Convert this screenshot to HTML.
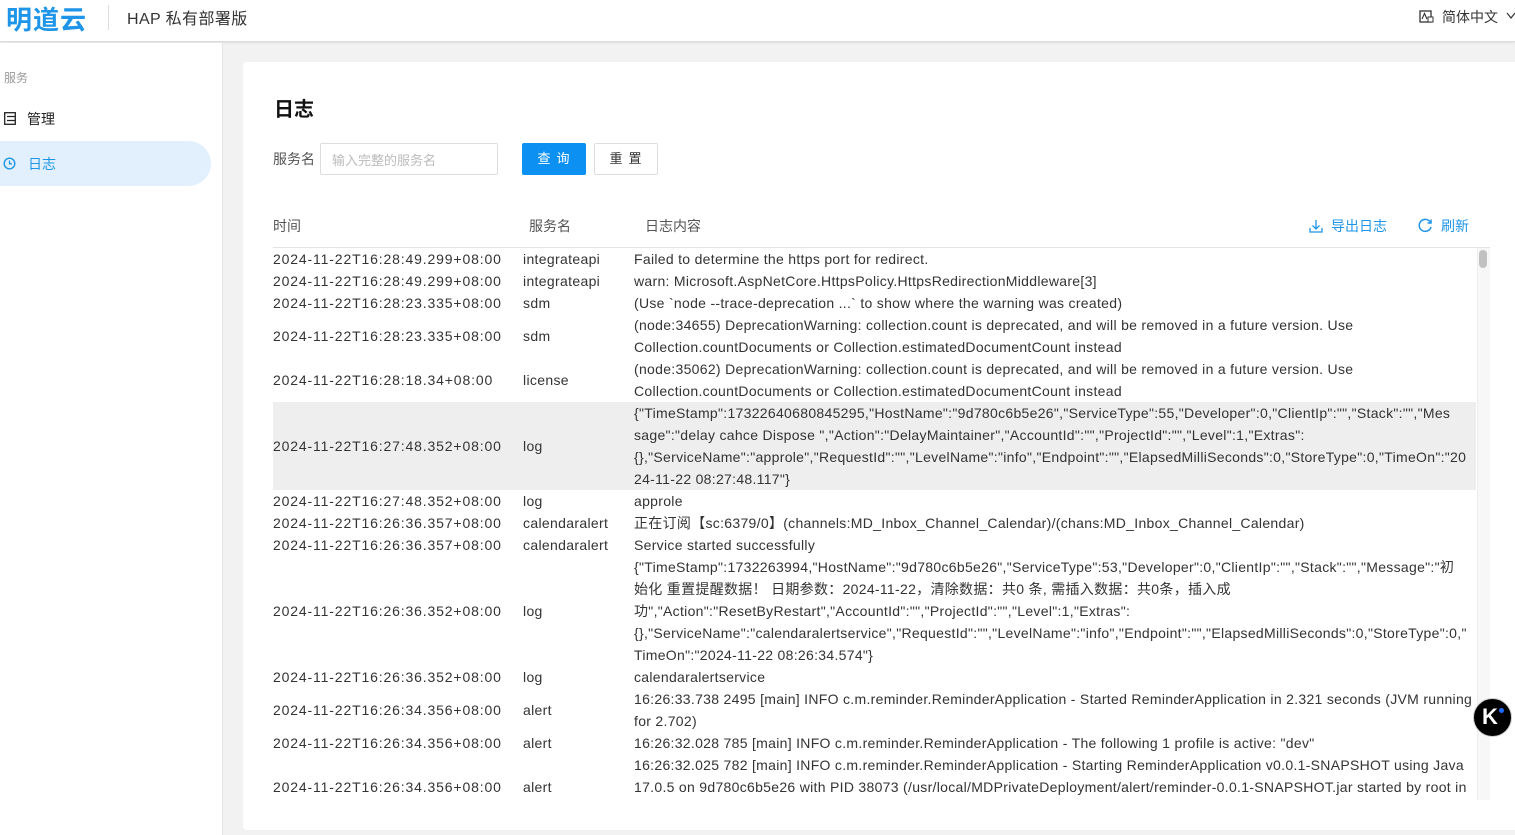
<!DOCTYPE html>
<html><head><meta charset="utf-8"><style>
*{margin:0;padding:0;box-sizing:border-box}
body{width:1515px;height:835px;overflow:hidden;background:#f2f2f2;font-family:"Liberation Sans","Noto Sans CJK SC",sans-serif;color:#333;position:relative}
.hdr{position:absolute;left:0;top:0;width:1515px;height:42px;background:#fff;border-bottom:1px solid #ddd;box-shadow:0 1px 2px rgba(0,0,0,.08)}
.side{position:absolute;left:0;top:43px;width:223px;height:792px;background:#fff;border-right:1px solid #e6e6e6}
.card{position:absolute;left:243px;top:62px;width:1280px;height:768px;background:#fff;border-radius:4px}
.abs{position:absolute;white-space:nowrap}
.row{position:absolute;left:273px;width:1203px;font-size:14px;color:#333}
.row div{position:absolute;top:0;height:100%;display:flex;align-items:center;white-space:nowrap;line-height:22px}
.t{left:0;letter-spacing:0.85px}.s{left:250px;letter-spacing:0.33px}.c{left:361px;letter-spacing:0.3px}
</style></head><body>
<div class="hdr">
<div class="abs" style="left:6px;top:0px;font-size:26px;font-weight:bold;color:#1e95e8;letter-spacing:1px">明道云</div>
<div class="abs" style="left:108px;top:5px;width:1px;height:25px;background:#ddd"></div>
<div class="abs" style="left:127px;top:5px;font-size:16px;color:#333;letter-spacing:0.4px">HAP 私有部署版</div>
<svg class="abs" style="left:1419px;top:10px" width="16" height="14" viewBox="0 0 16 14"><rect x="1" y="1" width="11" height="11" fill="none" stroke="#333" stroke-width="1.3"/><path d="M3 9 L5.5 3.5 L8 9" fill="none" stroke="#333" stroke-width="1.1"/><rect x="9" y="7" width="5" height="5" fill="#fff" stroke="#333"/></svg>
<div class="abs" style="left:1442px;top:7px;font-size:14px;color:#333">简体中文</div>
<svg class="abs" style="left:1506px;top:12px" width="10" height="8"><path d="M1 1 L5 6 L9 1" fill="none" stroke="#333" stroke-width="1.2"/></svg>
</div>
<div class="side">
<div class="abs" style="left:4px;top:26px;font-size:12px;color:#999">服务</div>
<svg class="abs" style="left:4px;top:69px" width="12" height="13"><rect x="0.7" y="0.7" width="10.6" height="11.6" fill="none" stroke="#222" stroke-width="1.3"/><path d="M3 4.5H11M3 8.5H11" stroke="#222" stroke-width="1.2"/></svg>
<div class="abs" style="left:27px;top:66px;font-size:14px;color:#222">管理</div>
<div class="abs" style="left:-10px;top:98px;width:221px;height:45px;background:#e1f0fc;border-radius:0 23px 23px 0"></div>
<svg class="abs" style="left:3px;top:114px" width="13" height="13"><circle cx="6.5" cy="6.5" r="5.3" fill="none" stroke="#1e95e8" stroke-width="1.4"/><path d="M6.5 3.5V6.8H9" fill="none" stroke="#1e95e8" stroke-width="1.3"/></svg>
<div class="abs" style="left:28px;top:111px;font-size:14px;color:#1e95e8">日志</div>
</div>
<div class="card"></div>
<div class="abs" style="left:274px;top:93px;font-size:20px;font-weight:bold;color:#111">日志</div>
<div class="abs" style="left:273px;top:149px;font-size:14px;color:#555">服务名</div>
<div class="abs" style="left:320px;top:143px;width:178px;height:32px;border:1px solid #ddd;border-radius:2px;font-size:13px;color:#bbb;padding:6px 11px">输入完整的服务名</div>
<div class="abs" style="left:522px;top:143px;width:64px;height:32px;background:#0c91f2;border-radius:2px;color:#fff;font-size:13px;text-align:center;line-height:31px;letter-spacing:6px;padding-left:5px">查询</div>
<div class="abs" style="left:594px;top:143px;width:64px;height:32px;border:1px solid #ddd;border-radius:2px;color:#333;font-size:13px;text-align:center;line-height:29px;letter-spacing:6px;padding-left:5px">重置</div>
<div class="abs" style="left:273px;top:216px;font-size:14px;color:#555">时间</div>
<div class="abs" style="left:529px;top:216px;font-size:14px;color:#555">服务名</div>
<div class="abs" style="left:645px;top:216px;font-size:14px;color:#555">日志内容</div>
<svg class="abs" style="left:1309px;top:219px" width="14" height="14"><path d="M7 1V10M3.5 6.5L7 10L10.5 6.5M1 9V13H13V9" fill="none" stroke="#1e95e8" stroke-width="1.3"/></svg>
<div class="abs" style="left:1331px;top:216px;font-size:14px;color:#1e95e8">导出日志</div>
<svg class="abs" style="left:1418px;top:218px" width="15" height="15"><path d="M12.5 4.5A6 6 0 1 0 13 9" fill="none" stroke="#1e95e8" stroke-width="1.5"/><path d="M13 1.5V5H9.5" fill="none" stroke="#1e95e8" stroke-width="1.5"/></svg>
<div class="abs" style="left:1441px;top:216px;font-size:14px;color:#1e95e8">刷新</div>
<div class="abs" style="left:273px;top:247px;width:1217px;height:1px;background:#e3e3e3"></div>
<div class="abs" style="left:1477px;top:248px;width:13px;height:552px;background:#f7f7f7;border-left:1px solid #eee"></div>
<div class="abs" style="left:1479px;top:250px;width:8px;height:18px;background:#c1c1c1;border-radius:4px"></div>
<div class="abs" style="left:0;top:248px;width:1476px;height:552px;overflow:hidden">
<div style="position:relative;left:0;top:-248px">
<div class="row" style="top:248px;height:22px"><div class="t">2024-11-22T16:28:49.299+08:00</div><div class="s">integrateapi</div><div class="c">Failed to determine the https port for redirect.</div></div>
<div class="row" style="top:270px;height:22px"><div class="t">2024-11-22T16:28:49.299+08:00</div><div class="s">integrateapi</div><div class="c">warn: Microsoft.AspNetCore.HttpsPolicy.HttpsRedirectionMiddleware[3]</div></div>
<div class="row" style="top:292px;height:22px"><div class="t">2024-11-22T16:28:23.335+08:00</div><div class="s">sdm</div><div class="c">(Use `node --trace-deprecation ...` to show where the warning was created)</div></div>
<div class="row" style="top:314px;height:44px"><div class="t">2024-11-22T16:28:23.335+08:00</div><div class="s">sdm</div><div class="c">(node:34655) DeprecationWarning: collection.count is deprecated, and will be removed in a future version. Use<br>Collection.countDocuments or Collection.estimatedDocumentCount instead</div></div>
<div class="row" style="top:358px;height:44px"><div class="t">2024-11-22T16:28:18.34+08:00</div><div class="s">license</div><div class="c">(node:35062) DeprecationWarning: collection.count is deprecated, and will be removed in a future version. Use<br>Collection.countDocuments or Collection.estimatedDocumentCount instead</div></div>
<div class="row" style="top:402px;height:88px;background:#eee"><div class="t">2024-11-22T16:27:48.352+08:00</div><div class="s">log</div><div class="c">{"TimeStamp":17322640680845295,"HostName":"9d780c6b5e26","ServiceType":55,"Developer":0,"ClientIp":"","Stack":"","Mes<br>sage":"delay cahce Dispose ","Action":"DelayMaintainer","AccountId":"","ProjectId":"","Level":1,"Extras":<br>{},"ServiceName":"approle","RequestId":"","LevelName":"info","Endpoint":"","ElapsedMilliSeconds":0,"StoreType":0,"TimeOn":"20<br>24-11-22 08:27:48.117"}</div></div>
<div class="row" style="top:490px;height:22px"><div class="t">2024-11-22T16:27:48.352+08:00</div><div class="s">log</div><div class="c">approle</div></div>
<div class="row" style="top:512px;height:22px"><div class="t">2024-11-22T16:26:36.357+08:00</div><div class="s">calendaralert</div><div class="c">正在订阅【sc:6379/0】(channels:MD_Inbox_Channel_Calendar)/(chans:MD_Inbox_Channel_Calendar)</div></div>
<div class="row" style="top:534px;height:22px"><div class="t">2024-11-22T16:26:36.357+08:00</div><div class="s">calendaralert</div><div class="c">Service started successfully</div></div>
<div class="row" style="top:556px;height:110px"><div class="t">2024-11-22T16:26:36.352+08:00</div><div class="s">log</div><div class="c">{"TimeStamp":1732263994,"HostName":"9d780c6b5e26","ServiceType":53,"Developer":0,"ClientIp":"","Stack":"","Message":"初<br>始化 重置提醒数据！ 日期参数：2024-11-22，清除数据：共0 条, 需插入数据：共0条，插入成<br>功","Action":"ResetByRestart","AccountId":"","ProjectId":"","Level":1,"Extras":<br>{},"ServiceName":"calendaralertservice","RequestId":"","LevelName":"info","Endpoint":"","ElapsedMilliSeconds":0,"StoreType":0,"<br>TimeOn":"2024-11-22 08:26:34.574"}</div></div>
<div class="row" style="top:666px;height:22px"><div class="t">2024-11-22T16:26:36.352+08:00</div><div class="s">log</div><div class="c">calendaralertservice</div></div>
<div class="row" style="top:688px;height:44px"><div class="t">2024-11-22T16:26:34.356+08:00</div><div class="s">alert</div><div class="c">16:26:33.738 2495 [main] INFO c.m.reminder.ReminderApplication - Started ReminderApplication in 2.321 seconds (JVM running<br>for 2.702)</div></div>
<div class="row" style="top:732px;height:22px"><div class="t">2024-11-22T16:26:34.356+08:00</div><div class="s">alert</div><div class="c">16:26:32.028 785 [main] INFO c.m.reminder.ReminderApplication - The following 1 profile is active: "dev"</div></div>
<div class="row" style="top:754px;height:66px"><div class="t">2024-11-22T16:26:34.356+08:00</div><div class="s">alert</div><div class="c">16:26:32.025 782 [main] INFO c.m.reminder.ReminderApplication - Starting ReminderApplication v0.0.1-SNAPSHOT using Java<br>17.0.5 on 9d780c6b5e26 with PID 38073 (/usr/local/MDPrivateDeployment/alert/reminder-0.0.1-SNAPSHOT.jar started by root in<br>/usr/local)</div></div>
</div></div>
<div class="abs" style="left:1473px;top:698px;width:39px;height:39px;border-radius:50%;background:#000;border:1px solid #ccc"></div>
<div class="abs" style="left:1482px;top:704px;font-size:22px;font-weight:bold;color:#fff">K</div>
<div class="abs" style="left:1499px;top:708px;width:5px;height:5px;border-radius:50%;background:#1e6cff"></div>
</body></html>
